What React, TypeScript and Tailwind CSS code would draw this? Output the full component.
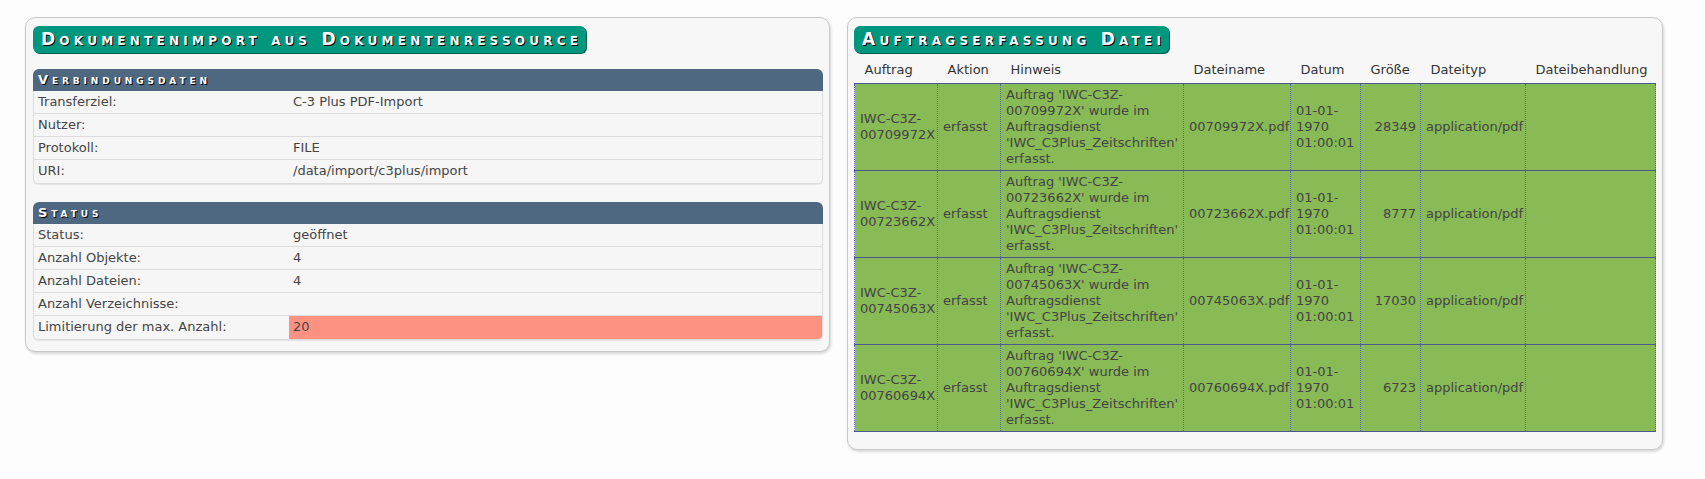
import React from 'react';

const font = 'font-["DejaVu_Sans",Verdana,sans-serif]';

interface KV {
  label: string;
  value: string;
  alert?: boolean;
}

const verbindung: KV[] = [
  { label: 'Transferziel:', value: 'C-3 Plus PDF-Import' },
  { label: 'Nutzer:', value: '' },
  { label: 'Protokoll:', value: 'FILE' },
  { label: 'URI:', value: '/data/import/c3plus/import' },
];

const status: KV[] = [
  { label: 'Status:', value: 'geöffnet' },
  { label: 'Anzahl Objekte:', value: '4' },
  { label: 'Anzahl Dateien:', value: '4' },
  { label: 'Anzahl Verzeichnisse:', value: '' },
  { label: 'Limitierung der max. Anzahl:', value: '20', alert: true },
];

const auftraege = [
  { id: '00709972X', size: '28349' },
  { id: '00723662X', size: '8777' },
  { id: '00745063X', size: '17030' },
  { id: '00760694X', size: '6723' },
];

const Badge: React.FC<{ title: string }> = ({ title }) => (
  <div className="inline-block rounded-[6px] bg-[#00977f] pl-[8px] pr-[4px] h-[27px] leading-[27px] shadow-[1px_1px_0_#00604f]">
    <span className="text-white font-bold text-[17px] [font-variant:small-caps] tracking-[0.25em] [text-shadow:1px_1px_0_#000]">
      {title}
    </span>
  </div>
);

const Section: React.FC<{ title: string; rows: KV[] }> = ({ title, rows }) => (
  <div>
    <div className="h-[22px] rounded-t-[6px] bg-[#4e6882] px-[5px] leading-[22px] text-white font-bold text-[13px] [font-variant:small-caps] tracking-[0.3em] [text-shadow:1px_1px_0_#000]">
      {title}
    </div>
    <div className="rounded-b-[5px] border border-t-0 border-[#dcdcdc] bg-[#f6f6f6] shadow-[0_1px_1px_rgba(0,0,0,0.08)]">
      {rows.map((r, i) => (
        <div
          key={r.label}
          className={`grid grid-cols-[255px_1fr] h-[23px] ${i < rows.length - 1 ? 'border-b border-[#dcdcdc]' : ''}`}
        >
          <div className="px-[4px] leading-[22px]">{r.label}</div>
          <div className={`px-[4px] leading-[22px] ${r.alert ? 'bg-[#fe9282] rounded-br-[4px]' : ''}`}>{r.value}</div>
        </div>
      ))}
    </div>
  </div>
);

const cols = [83, 63, 183, 107, 70, 60, 105, 130];
const heads = ['Auftrag', 'Aktion', 'Hinweis', 'Dateiname', 'Datum', 'Größe', 'Dateityp', 'Dateibehandlung'];

export default function App() {
  return (
    <div className={`min-h-screen bg-[#fdfdfd] ${font} text-[13px] text-[#444] pl-[25px] pt-[17px]`}>
      <div className="flex items-start gap-[17px]">
        {/* Dokumentenimport */}
        <div className="w-[805px] rounded-[10px] border border-[#c8c8c8] bg-[#f7f7f7] pl-[7px] pr-[6px] pt-[8px] pb-[11px] shadow-[1px_2px_3px_rgba(0,0,0,0.15)]">
          <Badge title="Dokumentenimport aus Dokumentenressource" />
          <div className="mt-[16px] flex flex-col gap-[18px]">
            <Section title="Verbindungsdaten" rows={verbindung} />
            <Section title="Status" rows={status} />
          </div>
        </div>

        {/* Auftragserfassung */}
        <div className="w-[816px] rounded-[10px] border border-[#c8c8c8] bg-[#f7f7f7] pl-[6px] pr-[7px] pt-[8px] pb-[17px] shadow-[1px_2px_3px_rgba(0,0,0,0.15)]">
          <Badge title="Auftragserfassung Datei" />
          <table className="mt-[5px] table-fixed border-collapse w-[801px]">
            <colgroup>
              {cols.map((w, i) => (
                <col key={i} style={{ width: w }} />
              ))}
            </colgroup>
            <thead>
              <tr className="h-[25px] border-b border-[#4a5a8c]">
                {heads.map((h) => (
                  <th key={h} className="pl-[10px] text-left font-normal text-[#333] leading-4">
                    {h}
                  </th>
                ))}
              </tr>
            </thead>
            <tbody>
              {auftraege.map((a) => (
                <tr key={a.id} className="bg-[#88ba55] border-b border-[#4a5a8c] [&>td]:border-x [&>td]:border-dotted [&>td]:border-[#5566bb] [&>td]:px-[5px] [&>td]:py-[3px] [&>td]:leading-4 [&>td]:align-middle">
                  <td>
                    IWC-C3Z-
                    <br />
                    {a.id}
                  </td>
                  <td>erfasst</td>
                  <td className="whitespace-nowrap">
                    Auftrag 'IWC-C3Z-
                    <br />
                    {a.id}' wurde im
                    <br />
                    Auftragsdienst
                    <br />
                    'IWC_C3Plus_Zeitschriften'
                    <br />
                    erfasst.
                  </td>
                  <td className="whitespace-nowrap">{a.id}.pdf</td>
                  <td>
                    01-01-
                    <br />
                    1970
                    <br />
                    01:00:01
                  </td>
                  <td className="!pr-[4px] text-right">{a.size}</td>
                  <td className="whitespace-nowrap">application/pdf</td>
                  <td></td>
                </tr>
              ))}
            </tbody>
          </table>
        </div>
      </div>
    </div>
  );
}
